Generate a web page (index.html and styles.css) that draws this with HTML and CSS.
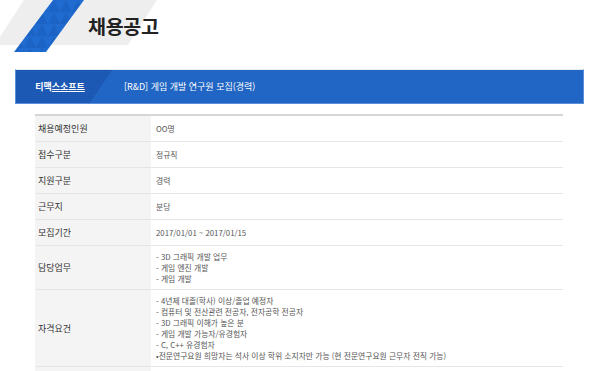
FILE: index.html
```html
<!DOCTYPE html>
<html lang="ko">
<head>
<meta charset="utf-8">
<link rel="stylesheet" href="styles.css">
</head>
<body>
<div class="page">
  <header class="head">
    <svg class="head-deco" width="200" height="60" viewBox="0 0 200 60">
      <defs>
        <pattern id="tri" width="12" height="12" patternUnits="userSpaceOnUse">
          <rect width="12" height="12" fill="#1f6bd0"/>
          <path d="M0 12 L6 0 L12 12 Z" fill="#1b64c6"/>
        </pattern>
      </defs>
      <polygon points="24,0 157,0 128,45 0,45 0,37" fill="#eeeeee"/>
      <polygon points="53,0 84,0 46,52 14,52" fill="url(#tri)"/>
    </svg>
    <h1 class="title">채용공고</h1>
  </header>
  <div class="bar">
    <div class="bar-company">티맥<span class="ul">스소프트</span></div>
    <div class="bar-title">[R&amp;D] 게임 개발 연구원 모집(경력)</div>
  </div>
  <table class="info">
    <tr><th>채용예정인원</th><td class="one">OO명</td></tr>
    <tr><th>접수구분</th><td class="one">정규직</td></tr>
    <tr><th>지원구분</th><td class="one">경력</td></tr>
    <tr><th>근무지</th><td class="one">분당</td></tr>
    <tr><th>모집기간</th><td class="one">2017/01/01 ~ 2017/01/15</td></tr>
    <tr><th>담당업무</th><td>- 3D 그래픽 개발 업무<br>- 게임 엔진 개발<br>- 게임 개발</td></tr>
    <tr><th>자격요건</th><td>- 4년제 대졸(학사) 이상/졸업 예정자<br>- 컴퓨터 및 전산관련 전공자, 전자공학 전공자<br>- 3D 그래픽 이해가 높은 분<br>- 게임 개발 가능자/유경험자<br>- C, C++ 유경험자<br>•전문연구요원 희망자는 석사 이상 학위 소지자만 가능 (현 전문연구요원 근무자 전직 가능)</td></tr>
    <tr><th>&nbsp;</th><td class="one">&nbsp;</td></tr>
  </table>
</div>
</body>
</html>
```
FILE: styles.css
```css
html, body {
  margin: 0;
  padding: 0;
  background: #ffffff;
}
body {
  font-family: "Noto Sans CJK KR", "Noto Sans", sans-serif;
  color: #333;
}
.page {
  width: 600px;
  height: 371px;
  overflow: hidden;
}
.head {
  position: relative;
  height: 69px;
  display: flex;
  align-items: flex-start;
}
.head-deco {
  position: absolute;
  left: 0;
  top: 0;
}
.title {
  position: relative;
  margin: 12px 0 0 88px;
  font-size: 19.5px;
  line-height: 28px;
  font-weight: 700;
  color: #222;
  letter-spacing: -0.3px;
}
.bar {
  margin: 0 16px 0 15px;
  height: 33px;
  display: flex;
  align-items: center;
  background: #2266c5;
  border: 1px solid #5b8fdc;
  border-top-color: #e6ebf2;
  position: relative;
}
.bar-company {
  width: 96px;
  height: 100%;
  display: flex;
  align-items: center;
  justify-content: center;
  padding-right: 8px;
  box-sizing: border-box;
  color: #fff;
  font-size: 9px;
  font-weight: 700;
  background: repeating-linear-gradient(180deg, #1b56b0 0 1px, #1e5bb8 1px 2px);
  clip-path: polygon(0 0, 100% 0, 77% 100%, 0 100%);
}
.bar-company .ul {
  text-decoration: underline;
}
.bar-title {
  margin-left: 12px;
  color: #fff;
  font-size: 9px;
}
.info {
  margin: 10px 0 0 35px;
  width: 528px;
  border-collapse: collapse;
  border-top: 2px solid #d6d6d6;
}
.info th {
  width: 113px;
  background: #f4f4f4;
  text-align: left;
  font-weight: 400;
  font-size: 9px;
  color: #333;
  padding: 0 0 0 3px;
  border-bottom: 1px solid #e3e7ec;
  vertical-align: middle;
}
.info td {
  font-size: 7.8px;
  line-height: 11px;
  color: #555;
  padding: 5px 0 5px 5px;
  border-bottom: 1px solid #e3e7ec;
  vertical-align: middle;
}
.info td.one {
  line-height: 15px;
}
```
